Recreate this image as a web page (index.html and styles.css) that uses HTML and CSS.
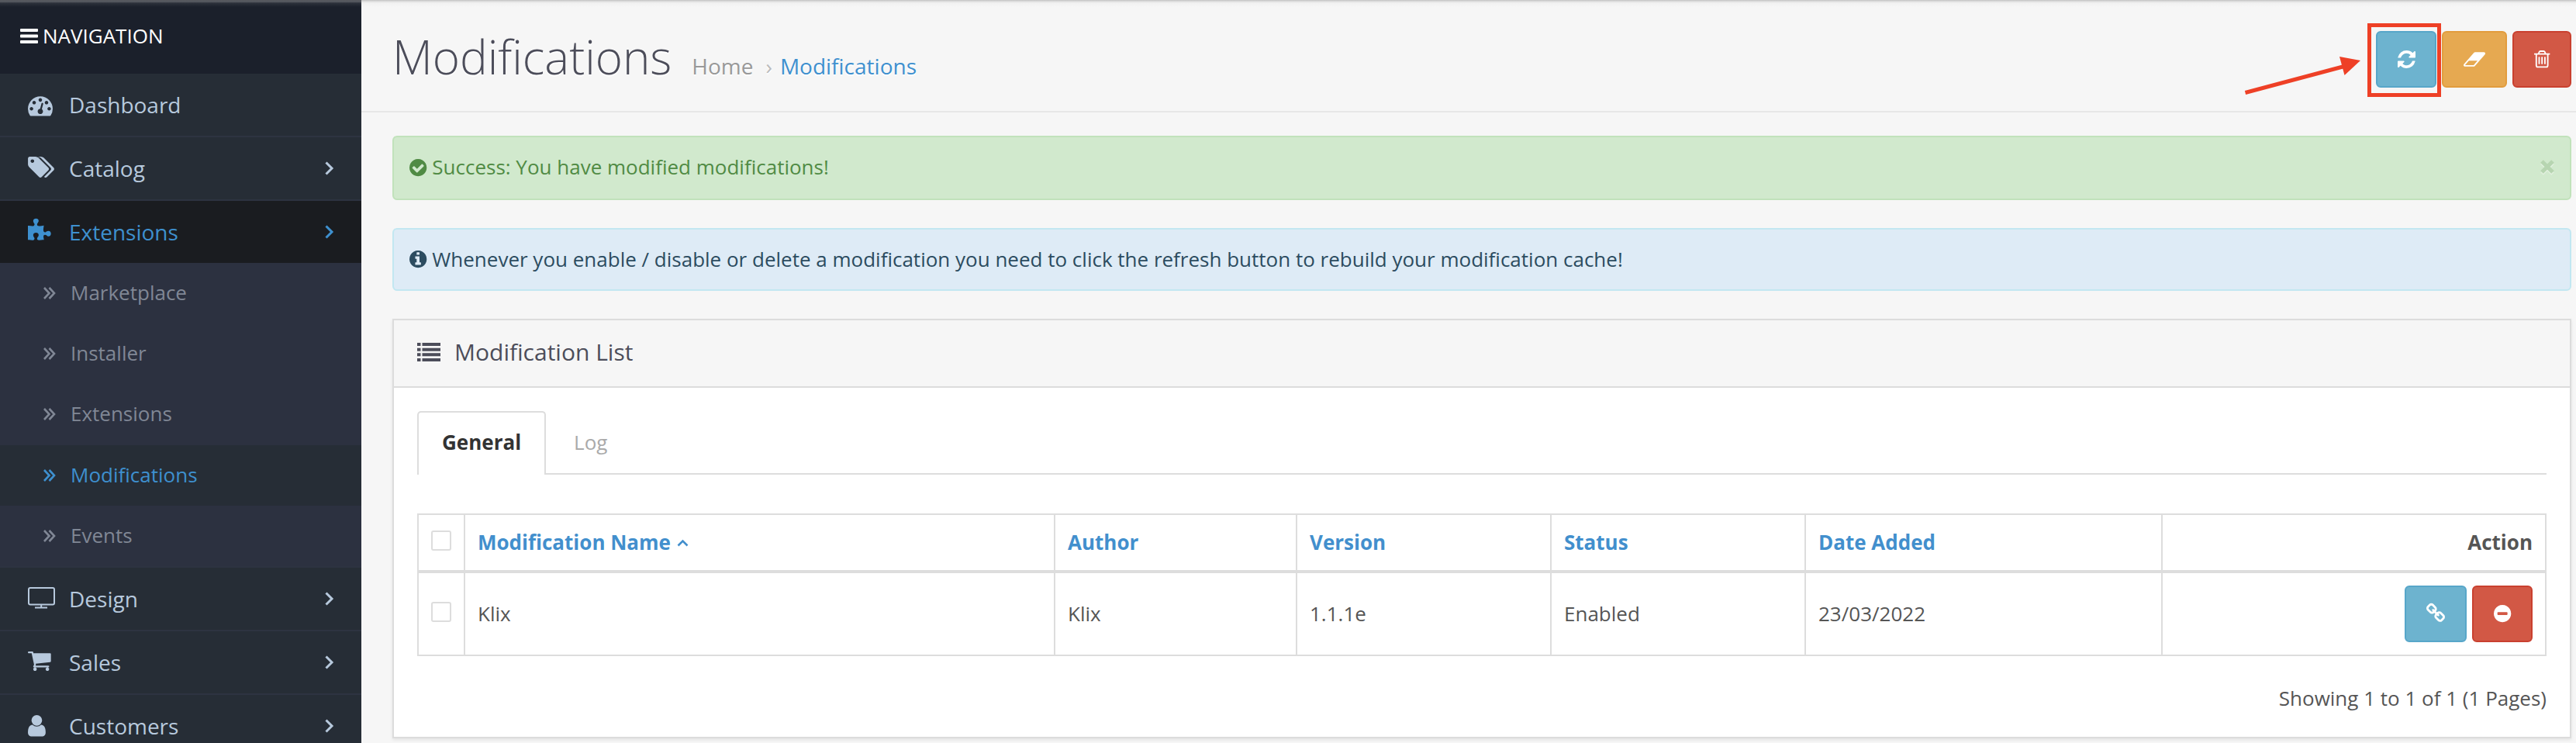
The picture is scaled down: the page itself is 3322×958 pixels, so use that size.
FILE: index.html
```html
<!DOCTYPE html>
<html lang="en">
<head>
<meta charset="utf-8">
<title>Modifications</title>
<link rel="stylesheet" href="styles.css">
</head>
<body>
<div class="page">
  <nav class="sidebar">
    <div class="nav-title">
      <svg width="23" height="19" viewBox="0 0 23 19" fill="currentColor"><rect y="0" width="23" height="4" rx="1"/><rect y="7.5" width="23" height="4" rx="1"/><rect y="15" width="23" height="4" rx="1"/></svg>
      <span>NAVIGATION</span>
    </div>
    <ul class="menu">
      <li><a class="menu-link"><span class="slot"><svg width="32" height="25.1" viewBox="0 128 1792 1408" fill="currentColor"><path d="M384 1152q0-53-37.5-90.5t-90.5-37.5-90.5 37.5-37.5 90.5 37.5 90.5 90.5 37.5 90.5-37.5 37.5-90.5zm192-448q0-53-37.5-90.5t-90.5-37.5-90.5 37.5-37.5 90.5 37.5 90.5 90.5 37.5 90.5-37.5 37.5-90.5zm428 481l101-382q6-26-7.5-48.5t-38.5-29.5-48 6.5-30 39.5l-101 382q-60 5-107 43.5t-63 98.5q-20 77 20 146t117 89 146-20 89-117q16-60-6-117t-72-91zm660-33q0-53-37.5-90.5t-90.5-37.5-90.5 37.5-37.5 90.5 37.5 90.5 90.5 37.5 90.5-37.5 37.5-90.5zm-640-640q0-53-37.5-90.5t-90.5-37.5-90.5 37.5-37.5 90.5 37.5 90.5 90.5 37.5 90.5-37.5 37.5-90.5zm448 192q0-53-37.5-90.5t-90.5-37.5-90.5 37.5-37.5 90.5 37.5 90.5 90.5 37.5 90.5-37.5 37.5-90.5zm320 448q0 261-141 483-19 29-54 29h-1402q-35 0-54-29-141-221-141-483 0-182 71-348t191-286 286-191 348-71 348 71 286 191 191 286 71 348z"/></svg></span><span>Dashboard</span></a></li>
      <li><a class="menu-link"><span class="slot slot-tags"><svg width="34" height="27" viewBox="0 128 1899 1515" fill="currentColor"><path d="M448 448q0-53-37.500-90.500t-90.500-37.500-90.500 37.500-37.500 90.500 37.500 90.500 90.500 37.500 90.500-37.500 37.500-90.500zm1067 576q0 53-37 90l-491 492q-39 37-91 37-53 0-90-37l-715-716q-38-37-64.500-101t-26.500-117v-416q0-52 38-90t90-38h416q53 0 117 26.500t102 64.500l715 714q37 39 37 91zm384 0q0 53-37 90l-491 492q-39 37-91 37-36 0-59-14t-53-45l470-470q37-37 37-90 0-52-37-91l-715-714q-38-38-102-64.500t-117-26.500h224q53 0 117 26.500t102 64.500l715 714q37 39 37 91z"/></svg></span><span>Catalog</span><svg class="arrow" width="11" height="18" viewBox="0 0 11 18"><path d="M1.500 1.500L9 9l-7.500 7.500"/></svg></a></li>
      <li class="open"><a class="menu-link active"><span class="slot slot-puzzle"><svg width="29.700" height="28" viewBox="91 0 1664 1568" fill="currentColor"><path d="M1755 1083q0 81-44.500 135t-123.500 54q-41 0-77.500-17.500t-59-38-56.500-38-71-17.500q-110 0-110 124 0 39 16 115t15 115v5q-22 0-33 1-34 3-97.500 11.500t-115.500 13.500-98 5q-61 0-103-26.500t-42-83.500q0-37 17.500-71t38-56.500 38-59 17.500-77.500q0-79-54-123.500t-135-44.500q-84 0-143 45.500t-59 127.500q0 43 15 83t33.500 64.500 33.500 53 15 50.500q0 45-46 89-37 35-117 35-95 0-245-24-9-2-27.500-4t-27.500-4l-13-2q-1 0-3-1-2 0-2-1v-1024q2 1 17.500 3.500t34 5 21.500 3.500q150 24 245 24 80 0 117-35 46-44 46-89 0-22-15-50.500t-33.500-53-33.500-64.500-15-83q0-82 59-127.500t144-45.500q80 0 134 44.500t54 123.500q0 41-17.500 77.500t-38 59-38 56.500-17.500 71q0 57 42 83.500t103 26.500q64 0 180-15t163-17v2q-1 2-3.500 17.500t-5 34-3.500 21.500q-24 150-24 245 0 80 35 117 44 46 89 46 22 0 50.500-15t53-33.500 64.500-33.500 83-15q82 0 127.500 59t45.500 143z"/></svg></span><span>Extensions</span><svg class="arrow" width="11" height="18" viewBox="0 0 11 18"><path d="M1.500 1.500L9 9l-7.500 7.500"/></svg></a>
        <ul class="submenu">
          <li><svg class="dbl" width="16" height="16" viewBox="0 0 16 16"><path d="M1 1l6.500 7L1 15M7.500 1l6.500 7-6.500 7"/></svg>Marketplace</li>
          <li><svg class="dbl" width="16" height="16" viewBox="0 0 16 16"><path d="M1 1l6.500 7L1 15M7.500 1l6.500 7-6.500 7"/></svg>Installer</li>
          <li><svg class="dbl" width="16" height="16" viewBox="0 0 16 16"><path d="M1 1l6.500 7L1 15M7.500 1l6.500 7-6.500 7"/></svg>Extensions</li>
          <li class="current"><svg class="dbl" width="16" height="16" viewBox="0 0 16 16"><path d="M1 1l6.500 7L1 15M7.500 1l6.500 7-6.500 7"/></svg>Modifications</li>
          <li><svg class="dbl" width="16" height="16" viewBox="0 0 16 16"><path d="M1 1l6.500 7L1 15M7.500 1l6.500 7-6.500 7"/></svg>Events</li>
        </ul>
      </li>
      <li><a class="menu-link"><span class="slot slot-tv"><svg width="35" height="28" viewBox="0 0 35 28" fill="none" stroke="currentColor" stroke-width="2"><rect x="1" y="1" width="33" height="21.500" rx="2"/><path d="M17.200 22.500V26M9 26.500h16"/></svg></span><span>Design</span><svg class="arrow" width="11" height="18" viewBox="0 0 11 18"><path d="M1.500 1.500L9 9l-7.500 7.500"/></svg></a></li>
      <li><a class="menu-link"><span class="slot slot-cart"><svg width="29.700" height="25.100" viewBox="0 256 1664 1408" fill="currentColor"><path d="M640 1536q0 52-38 90t-90 38-90-38-38-90 38-90 90-38 90 38 38 90zm896 0q0 52-38 90t-90 38-90-38-38-90 38-90 90-38 90 38 38 90zm128-1088v512q0 24-16.500 42.500t-40.500 21.500l-1044 122q13 60 13 70 0 16-24 64h920q26 0 45 19t19 45-19 45-45 19h-1024q-26 0-45-19t-19-45q0-11 8-31.500t16-36 21.500-40 15.500-29.500l-177-823h-204q-26 0-45-19t-19-45 19-45 45-19h256q16 0 28.500 6.500t19.500 15.500 13 24.500 8 26 5.500 29.500 4.500 26h1201q26 0 45 19t19 45z"/></svg></span><span>Sales</span><svg class="arrow" width="11" height="18" viewBox="0 0 11 18"><path d="M1.500 1.500L9 9l-7.500 7.500"/></svg></a></li>
      <li><a class="menu-link"><span class="slot"><svg width="22.900" height="27.400" viewBox="0 128 1280 1536" fill="currentColor"><path d="M1280 1399q0 109-62.500 187t-150.500 78h-854q-88 0-150.500-78t-62.500-187q0-85 8.500-160.500t31.500-152 58.500-131 94-89 134.500-34.500q131 128 313 128t313-128q76 0 134.500 34.500t94 89 58.500 131 31.500 152 8.500 160.500zm-256-887q0 159-112.500 271.500t-271.500 112.500-271.500-112.500-112.500-271.500 112.500-271.500 271.500-112.500 271.500 112.500 112.500 271.500z"/></svg></span><span>Customers</span><svg class="arrow" width="11" height="18" viewBox="0 0 11 18"><path d="M1.500 1.500L9 9l-7.500 7.500"/></svg></a></li>
    </ul>
  </nav>

  <main class="content">
    <header class="page-header">
      <div class="heading">
        <h1>Modifications</h1>
        <div class="breadcrumb"><a>Home</a><span class="sep">›</span><a class="here">Modifications</a></div>
      </div>
      <div class="toolbar">
        <a class="btn info refresh"><svg width="23" height="23" viewBox="128 128 1536 1536" fill="currentColor"><path d="M1639 1056q0 5-1 7-64 268-268 434.500t-478 166.500q-146 0-282.500-55t-243.500-157l-129 129q-19 19-45 19t-45-19-19-45v-448q0-26 19-45t45-19h448q26 0 45 19t19 45-19 45l-137 137q71 66 161 102t187 36q134 0 250-65t186-179q11-17 53-117 8-23 30-23h192q13 0 22.500 9.500t9.500 22.500zm25-800v448q0 26-19 45t-45 19h-448q-26 0-45-19t-19-45 19-45l138-138q-148-137-349-137-134 0-250 65t-186 179q-11 17-53 117-8 23-30 23h-199q-13 0-22.500-9.500t-9.500-22.500v-7q65-268 270-434.500t480-166.500q146 0 284 55.500t245 156.500l130-129q19-19 45-19t45 19 19 45z"/></svg></a>
        <a class="btn warning"><svg width="28" height="19" viewBox="0 256 1920 1280" fill="currentColor"><path d="M896 1408l336-384h-768l-336 384h768zm1013-1077q15 34 9.500 71.500t-30.500 65.500l-896 1024q-38 44-96 44h-768q-38 0-69.500-20.500t-47.500-54.500q-15-34-9.500-71.500t30.500-65.500l896-1024q38-44 96-44h768q38 0 69.500 20.500t47.500 54.500z"/></svg></a>
        <a class="btn danger trash"><svg width="20.400" height="22.300" viewBox="192 128 1408 1536" fill="currentColor"><path d="M704 736v576q0 14-9 23t-23 9h-64q-14 0-23-9t-9-23v-576q0-14 9-23t23-9h64q14 0 23 9t9 23zm256 0v576q0 14-9 23t-23 9h-64q-14 0-23-9t-9-23v-576q0-14 9-23t23-9h64q14 0 23 9t9 23zm256 0v576q0 14-9 23t-23 9h-64q-14 0-23-9t-9-23v-576q0-14 9-23t23-9h64q14 0 23 9t9 23zm128 724v-948h-896v948q0 22 7 40.500t14.500 27 10.500 8.500h832q3 0 10.500-8.500t14.500-27 7-40.500zm-672-1076h448l-48-117q-7-9-17-11h-317q-10 2-17 11zm928 32v64q0 14-9 23t-23 9h-96v948q0 83-47 143.500t-113 60.500h-832q-66 0-113-58.500t-47-141.500v-952h-96q-14 0-23-9t-9-23v-64q0-14 9-23t23-9h309l70-167q15-37 54-63t79-26h320q40 0 79 26t54 63l70 167h309q14 0 23 9t9 23z"/></svg></a>
        <svg class="callout" width="260" height="100" viewBox="0 0 260 100"><path d="M3.500 94.500L133 60" stroke="#ee4026" stroke-width="5"/><path d="M125 48l27 5-20.500 19z" fill="#ee4026"/><rect x="163.500" y="7.500" width="90" height="90" fill="none" stroke="#ee4026" stroke-width="5"/></svg>
      </div>
    </header>

    <div class="alert success">
      <svg width="22.300" height="22.300" viewBox="128 128 1536 1536" fill="currentColor"><path d="M1412 734q0-28-18-46l-91-90q-19-19-45-19t-45 19l-408 407-226-226q-19-19-45-19t-45 19l-91 90q-18 18-18 46 0 27 18 45l362 362q19 19 45 19 27 0 46-19l543-543q18-18 18-45zm252 162q0 209-103 385.500t-279.500 279.500-385.500 103-385.500-103-279.500-279.500-103-385.500 103-385.500 279.500-279.500 385.500-103 385.500 103 279.500 279.500 103 385.500z"/></svg>
      <span>Success: You have modified modifications!</span>
      <svg class="close" width="18" height="20" viewBox="0 0 18 20"><path d="M2 4l14 14M16 4L2 18" stroke="#fff" stroke-opacity=".35" stroke-width="5.200"/><path d="M2 2l14 14M16 2L2 16" stroke="#b7d5b1" stroke-width="5.200"/></svg>
    </div>
    <div class="alert note">
      <svg width="22.300" height="22.300" viewBox="128 128 1536 1536" fill="currentColor"><path d="M1152 1376v-160q0-14-9-23t-23-9h-96v-512q0-14-9-23t-23-9h-320q-14 0-23 9t-9 23v160q0 14 9 23t23 9h96v320h-96q-14 0-23 9t-9 23v160q0 14 9 23t23 9h448q14 0 23-9t9-23zm-128-896v-160q0-14-9-23t-23-9h-192q-14 0-23 9t-9 23v160q0 14 9 23t23 9h192q14 0 23-9t9-23zm640 416q0 209-103 385.500t-279.500 279.500-385.500 103-385.500-103-279.500-279.500-103-385.500 103-385.500 279.500-279.500 385.500-103 385.500 103 279.500 279.500 103 385.500z"/></svg>
      <span>Whenever you enable / disable or delete a modification you need to click the refresh button to rebuild your modification cache!</span>
    </div>

    <section class="panel">
      <div class="panel-heading">
        <svg width="30" height="24" viewBox="0 0 30 24" fill="currentColor"><path d="M0 0h4.500v4H0zM6.500 0H30v4H6.500zM0 6.700h4.500v4H0zM6.500 6.700H30v4H6.500zM0 13.300h4.500v4H0zM6.500 13.300H30v4H6.500zM0 20h4.500v4H0zM6.500 20H30v4H6.500z"/></svg>
        <h3>Modification List</h3>
      </div>
      <div class="panel-body">
        <div class="tabs"><a class="tab selected">General</a><a class="tab">Log</a></div>
        <table class="list">
          <colgroup><col class="c1"><col class="c2"><col class="c3"><col class="c4"><col class="c5"><col class="c6"><col class="c7"></colgroup>
          <thead><tr>
            <th class="check"><span class="box"></span></th>
            <th>Modification Name<svg class="caret" width="15" height="10" viewBox="0 0 15 10"><path d="M1.500 8.500l6-6 6 6"/></svg></th>
            <th>Author</th><th>Version</th><th>Status</th><th>Date Added</th><th class="action">Action</th>
          </tr></thead>
          <tbody><tr>
            <td class="check"><span class="box"></span></td>
            <td>Klix</td><td>Klix</td><td>1.1.1e</td><td>Enabled</td><td>23/03/2022</td>
            <td class="buttons"><div class="row-actions">
              <a class="btn info link"><svg width="24" height="25" viewBox="80 128 1632 1632" fill="currentColor"><path d="M1520 1216q0-40-28-68l-208-208q-28-28-68-28-42 0-72 32 3 3 19 18.500t21.500 21.500 15 19 13 25.500 3.500 27.500q0 40-28 68t-68 28q-15 0-27.500-3.500t-25.500-13-19-15-21.500-21.500-18.500-19q-33 31-33 73 0 40 28 68l206 207q27 27 68 27 40 0 68-26l147-146q28-28 28-67zm-703-705q0-40-28-68l-206-207q-28-28-68-28-39 0-68 27l-147 146q-28 28-28 67 0 40 28 68l208 208q27 27 68 27 42 0 72-31-3-3-19-18.500t-21.500-21.500-15-19-13-25.500-3.500-27.500q0-40 28-68t68-28q15 0 27.500 3.500t25.500 13 19 15 21.500 21.500 18.500 19q33-31 33-73zm895 705q0 120-85 203l-147 146q-83 83-203 83-121 0-204-85l-206-207q-83-83-83-203 0-123 88-209l-88-88q-86 88-208 88-120 0-204-84l-208-208q-84-84-84-204t85-203l147-146q83-83 203-83 121 0 204 85l206 207q83 83 83 203 0 123-88 209l88 88q86-88 208-88 120 0 204 84l208 208q84 84 84 204z"/></svg></a>
              <a class="btn danger minus"><svg width="22.300" height="22.300" viewBox="128 128 1536 1536" fill="currentColor"><path d="M1344 960v-128q0-26-19-45t-45-19h-768q-26 0-45 19t-19 45v128q0 26 19 45t45 19h768q26 0 45-19t19-45zm320-64q0 209-103 385.500t-279.500 279.500-385.500 103-385.500-103-279.500-279.500-103-385.500 103-385.500 279.500-279.500 385.500-103 385.500 103 279.500 279.500 103 385.500z"/></svg></a>
            </div></td>
          </tr></tbody>
        </table>
        <div class="summary">Showing 1 to 1 of 1 (1 Pages)</div>
      </div>
    </section>
  </main>
  <div class="top-shade"></div>
</div>
</body>
</html>
```
FILE: styles.css
```css
* { box-sizing: border-box; }
html, body { margin: 0; height: 100%; }
body {
  background: #f6f6f6;
  color: #555;
  font: 26px/38px "Open Sans", "Noto Sans", sans-serif;
  overflow: hidden;
}
ul { list-style: none; margin: 0; padding: 0; }
svg { display: block; flex: none; overflow: visible; }
.page { position: relative; display: flex; height: 958px; overflow: hidden; }
.top-shade {
  position: absolute; top: 0; left: 0; right: 0; height: 9px;
  background: linear-gradient(rgba(140, 140, 140, .5) 0, rgba(190, 190, 190, .38) 2px, rgba(200, 200, 200, .1) 4px, rgba(200, 200, 200, 0) 9px);
}

/* Sidebar */
.sidebar { width: 466px; flex: none; background: #262d36; overflow: hidden; }
.nav-title {
  display: flex; align-items: center; gap: 6px;
  height: 95px; padding: 0 26px 2px;
  background: #1b202b; color: #fff;
}
.nav-title span { padding-bottom: 2px; }
.menu > li { border-bottom: 2px solid #2d3341; }
.menu-link { display: flex; align-items: center; height: 80px; padding: 0 36px; color: #b7c9dd; font-size: 28px; }
.menu-link.active { background: #1a1c20; color: #3e90cf; }
.slot { width: 53px; flex: none; }
.slot-tags { padding-bottom: 3px; }
.slot-puzzle { padding-bottom: 6px; }
.slot-tv, .slot-cart { padding-bottom: 2px; }
.arrow { margin-left: auto; fill: none; stroke: currentColor; stroke-width: 3; }
.submenu { background: #2c3140; }
.submenu li { display: flex; align-items: center; gap: 19px; height: 78.2px; padding: 0 0 2px 56px; color: #808795; }
.submenu .current { background: #262d36; color: #3e90cf; }
.dbl { margin-top: 2px; fill: none; stroke: currentColor; stroke-width: 2.6; }

/* Header */
.content { flex: 1; min-width: 0; }
.page-header {
  display: flex; justify-content: space-between; align-items: flex-start;
  height: 145px; padding: 40px 6px 0 40px; border-bottom: 2px solid #e7e7e7;
}
.heading { display: flex; align-items: baseline; gap: 26px; text-shadow: 0 2px #fff; }
h1 { margin: 0; font-size: 60px; line-height: 66px; font-weight: 300; color: #4c4d5a; }
.breadcrumb { display: flex; align-items: baseline; font-size: 28px; color: #999; }
.sep { margin: 0 10px 0 16px; color: #bbb; }
.here { color: #3e90cf; }
.toolbar { position: relative; display: flex; gap: 7px; }
.callout { position: absolute; top: -15px; left: -172px; }
.btn { display: flex; align-items: center; justify-content: center; width: 78px; height: 73px; border: 2px solid; border-radius: 6px; color: #fff; }
.btn.info { background: #6db3cf; border-color: #57a6c9; }
.btn.warning { width: 84px; background: #e6a951; border-color: #e29c3d; }
.btn.danger { background: #d25845; border-color: #c9402f; }
.btn.trash { width: 76px; }
.btn.link { width: 80px; }

/* Alerts */
.alert { display: flex; align-items: center; gap: 7px; margin: 0 6px 0 40px; padding: 0 20px; border: 2px solid; border-radius: 6px; }
.alert span { padding-bottom: 2px; }
.success { height: 83px; margin-top: 30px; padding-bottom: 1px; background: #d1e9cd; border-color: #c1e2bb; color: #508b44; }
.note { height: 81px; margin-top: 36px; background: #deebf6; border-color: #c2e7f1; color: #2c4c60; }
.close { margin-left: auto; fill: none; }

/* Panel */
.panel { margin: 36px 6px 0 40px; background: #fff; border: 2px solid #dcdcdc; height: 541px; box-shadow: 0 2px 4px rgba(0, 0, 0, .08); }
.panel-heading { display: flex; align-items: center; gap: 18px; height: 87px; padding: 0 30px 4px; background: #f6f6f6; border-bottom: 2px solid #dcdcdc; color: #4c4d5a; }
h3 { margin: 0; font-size: 30px; font-weight: 400; }
.panel-body { padding: 30px; }
.tabs { display: flex; height: 82px; margin-bottom: 50px; border-bottom: 2px solid #ddd; }
.tab { height: 82px; padding: 19px 34px; border: 2px solid transparent; border-bottom: 0; border-radius: 5px 5px 0 0; color: #aaa; }
.tab.selected { padding: 19px 30px; background: #fff; border-color: #ddd; color: #333; font-weight: 700; }
.list { width: 2746px; table-layout: fixed; border-collapse: collapse; }
.c1 { width: 60px; }
.c2 { width: 761px; }
.c3 { width: 312px; }
.c4 { width: 328px; }
.c5 { width: 328px; }
.c6 { width: 460px; }
.list th, .list td { border: 2px solid #ddd; padding: 0 16px 1px; text-align: left; vertical-align: middle; }
.list th { height: 74px; border-bottom-width: 4px; color: #428fcd; font-weight: 700; }
.list td { height: 108px; }
.list .buttons { padding-bottom: 0; }
.list .action { text-align: right; color: #555; }
.box { display: block; width: 26px; height: 26px; margin-bottom: 4px; border: 2px solid #ddd; border-radius: 3px; }
.caret { display: inline-block; margin-left: 8px; fill: none; stroke: currentColor; stroke-width: 2.6; vertical-align: 4px; }
.row-actions { display: flex; justify-content: flex-end; gap: 7px; }
.summary { margin-top: 35px; text-align: right; }
```
